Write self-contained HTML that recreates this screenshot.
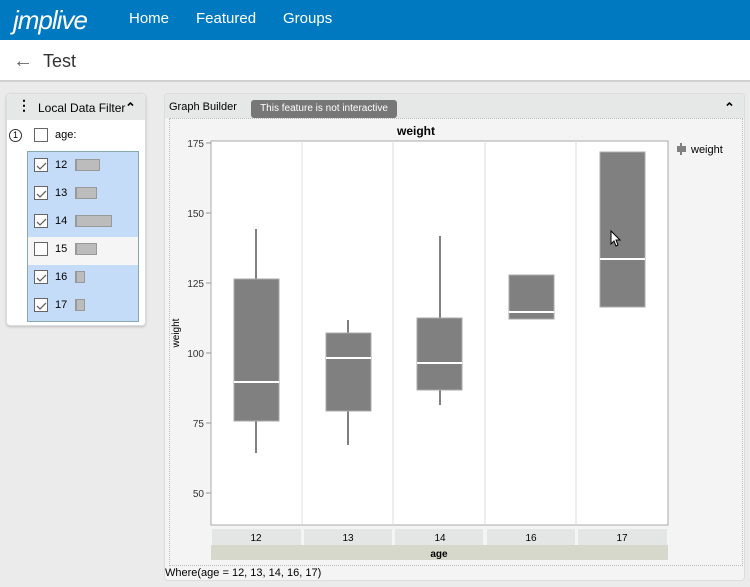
<!DOCTYPE html>
<html><head><meta charset="utf-8"><style>
*{box-sizing:border-box;margin:0;padding:0}
body{width:750px;height:587px;background:#ebebeb;font-family:"Liberation Sans",Arial,sans-serif;position:relative;overflow:hidden}
.top{position:absolute;left:0;top:0;width:750px;height:40px;background:#0079c1;color:#fff}
.top .logo{position:absolute;left:13px;top:5px;font-size:26px;font-style:italic;letter-spacing:-1px}
.top .n{position:absolute;top:10px;font-size:15px}
.sub{position:absolute;left:0;top:40px;width:750px;height:42px;background:#fff;border-bottom:2px solid #d0d0d0}
.abs{position:absolute}
.ldf{position:absolute;left:6px;top:93px;width:140px;height:233px;background:#fff;border:1px solid #ddd;border-radius:4px;box-shadow:0 1px 2px #bbb}
.ldfh{height:26px;background:#e6e7e7;font-size:12px;border-radius:4px 4px 0 0}
.cb{position:absolute;width:14px;height:14px;border:1.5px solid #666;background:#fff}
.bar{position:absolute;height:12px;background:#bcbcbc;border:1px solid #999;border-left:2px solid #999}
.gb{position:absolute;left:164px;top:93px;width:581px;height:488px;background:#f4f4f4;border:1px solid #ddd;border-radius:4px}
</style></head><body>
<div class="top"><div class="logo">jmplive</div>
<div class="n" style="left:129px">Home</div><div class="n" style="left:196px">Featured</div><div class="n" style="left:283px">Groups</div></div>
<div class="sub"></div>
<div class="abs" style="left:13px;top:50px;font-size:20px;color:#666">←</div>
<div class="abs" style="left:43px;top:51px;font-size:18px;color:#333">Test</div>

<div class="ldf"><div class="ldfh"><span class="abs" style="left:10px;top:3px;font-weight:bold;font-size:14px">⋮</span><span class="abs" style="left:31px;top:7px">Local Data Filter</span><span class="abs" style="left:118px;top:6px;font-size:13px;font-weight:bold">⌃</span></div>
<div class="abs" style="left:2px;top:35px;width:13px;height:13px;border:1px solid #333;border-radius:50%;font-size:9px;text-align:center;line-height:11px">1</div>
<div class="cb" style="left:27px;top:34px"></div><div class="abs" style="left:48px;top:35px;font-size:11px">age:</div>
<div class="abs" style="left:20px;top:57px;width:112px;height:171px;border:1px solid #8aa;background:#c5dcf8"></div>
<div class="abs" style="left:21px;top:143px;width:110px;height:28px;background:#f5f5f5"></div>
<div class="cb" style="left:27px;top:64px"></div><div class="abs" style="left:48px;top:65px;font-size:11px">12</div><div class="bar" style="left:68px;top:65px;width:25px"></div>
<div class="cb" style="left:27px;top:92px"></div><div class="abs" style="left:48px;top:93px;font-size:11px">13</div><div class="bar" style="left:68px;top:93px;width:22px"></div>
<div class="cb" style="left:27px;top:120px"></div><div class="abs" style="left:48px;top:121px;font-size:11px">14</div><div class="bar" style="left:68px;top:121px;width:37px"></div>
<div class="cb" style="left:27px;top:148px"></div><div class="abs" style="left:48px;top:149px;font-size:11px">15</div><div class="bar" style="left:68px;top:149px;width:22px"></div>
<div class="cb" style="left:27px;top:176px"></div><div class="abs" style="left:48px;top:177px;font-size:11px">16</div><div class="bar" style="left:68px;top:177px;width:10px"></div>
<div class="cb" style="left:27px;top:204px"></div><div class="abs" style="left:48px;top:205px;font-size:11px">17</div><div class="bar" style="left:68px;top:205px;width:10px"></div>
<svg class="abs" style="left:0;top:0" width="140" height="233" fill="none" stroke="#666" stroke-width="1.3"><path d="M30 72l3 3 6-6M30 100l3 3 6-6M30 128l3 3 6-6M30 184l3 3 6-6M30 212l3 3 6-6"/></svg>
</div>

<div class="gb">
<div class="abs" style="left:0;top:0;width:579px;height:24px;background:#e6e7e7;border-radius:4px 4px 0 0"></div>
<div class="abs" style="left:4px;top:7px;font-size:11px">Graph Builder</div>
<div class="abs" style="left:86px;top:6px;width:146px;height:18px;background:#777;border-radius:3px;color:#fff;font-size:10px;padding:3px 0;text-align:center;white-space:nowrap;overflow:hidden">This feature is not interactive</div>
<div class="abs" style="left:559px;top:6px;font-size:13px;font-weight:bold">⌃</div>
<div class="abs" style="left:4px;top:24px;width:574px;height:448px;border:1px dotted #bbb;background:#f4f4f4"></div>
<div class="abs" style="left:0;top:473px;font-size:11px">Where(age = 12, 13, 14, 16, 17)</div>
</div>

<svg class="abs" style="left:0;top:0" width="750" height="587" font-family="Liberation Sans,Arial,sans-serif">
<rect x="211" y="141" width="457" height="384" fill="#fff" stroke="#aaa"/>
<g stroke="#ddd"><path d="M302 141V525M393 141V525M485 141V525M576 141V525"/></g>
<text x="416" y="135" font-size="12" font-weight="bold" text-anchor="middle">weight</text>
<g font-size="10" text-anchor="end" fill="#333">
<text x="204" y="147">175</text><text x="204" y="217">150</text><text x="204" y="287">125</text><text x="204" y="357">100</text><text x="204" y="427">75</text><text x="204" y="497">50</text></g>
<g stroke="#999"><path d="M206 143h5M206 213h5M206 283h5M206 353h5M206 423h5M206 493h5"/></g>
<text transform="translate(179 333) rotate(-90)" font-size="10" text-anchor="middle">weight</text>
<g stroke="#808080" stroke-width="2"><path d="M256 229V453M348 320V445M440 236V405"/></g>
<g fill="#808080" stroke="#aaa"><rect x="234" y="279" width="45" height="142"/><rect x="326" y="333" width="45" height="78"/><rect x="417" y="318" width="45" height="72"/><rect x="509" y="275" width="45" height="44"/><rect x="600" y="152" width="45" height="155"/></g>
<g stroke="#fff" stroke-width="2"><path d="M234 382h45M326 358h45M417 363h45M509 312h45M600 259h45"/></g>
<rect x="677" y="146" width="9" height="6" fill="#808080"/><path d="M681 143v12" stroke="#808080" stroke-width="2"/>
<text x="691" y="153" font-size="11">weight</text>
<g fill="#e4e6e6"><rect x="212" y="529" width="89" height="16"/><rect x="304" y="529" width="88" height="16"/><rect x="395" y="529" width="88" height="16"/><rect x="487" y="529" width="88" height="16"/><rect x="578" y="529" width="89" height="16"/></g>
<rect x="211" y="545" width="457" height="15" fill="#d7d8cc"/>
<g font-size="10" text-anchor="middle"><text x="256" y="541">12</text><text x="348" y="541">13</text><text x="440" y="541">14</text><text x="531" y="541">16</text><text x="622" y="541">17</text><text x="439" y="557" font-weight="bold">age</text></g>
<path d="M611 231v13l3-3 2 5 2-1-2-5h4z" fill="#fff" stroke="#000" stroke-width="1"/>
</svg>
</body></html>
